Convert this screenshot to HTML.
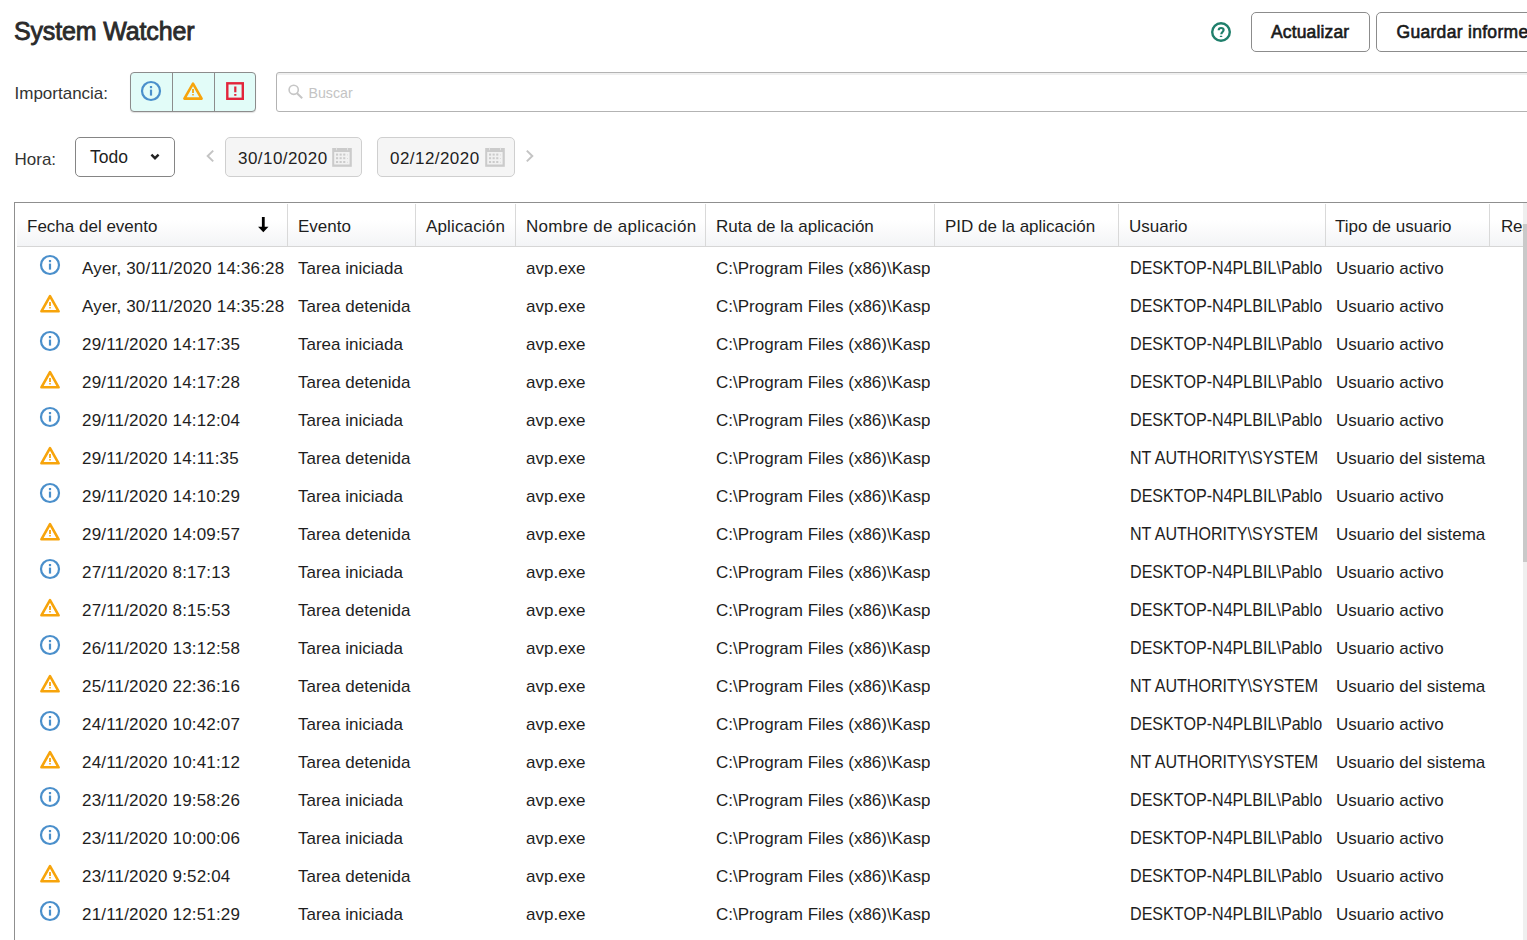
<!DOCTYPE html>
<html><head><meta charset="utf-8"><title>System Watcher</title>
<style>
html,body{margin:0;padding:0;background:#fff;}
body{width:1527px;height:940px;overflow:hidden;position:relative;font-family:"Liberation Sans",sans-serif;color:#1e1e1e;}
.t{position:absolute;font-size:17px;line-height:17px;white-space:nowrap;}
.ic{position:absolute;}
.abs{position:absolute;box-sizing:border-box;}
</style></head><body>

<div class="t" style="left:14px;top:19.34px;font-size:25px;line-height:25px;font-weight:400;-webkit-text-stroke:0.85px #2b2b2b;color:#2b2b2b;letter-spacing:-0.15px">System Watcher</div>
<svg class="ic" style="left:1210px;top:21px" width="22" height="22" viewBox="0 0 22 22"><circle cx="11" cy="11" r="8.8" fill="none" stroke="#1f7f6b" stroke-width="2.4"/><path d="M8.7 9.3 C8.7 7.6 9.9 7 11.1 7 C12.6 7 13.6 7.9 13.6 9.1 C13.6 10.9 11.3 11.2 11.3 13.2" fill="none" stroke="#1f7f6b" stroke-width="2.2"/><rect x="9.8" y="14.8" width="2.5" height="1.2" rx="0.5" fill="#1f7f6b"/></svg>
<div class="abs" style="left:1251px;top:12px;width:119px;height:40px;border:1px solid #8c8c8c;border-radius:5px;background:#fff"></div>
<div class="t" style="left:1271px;top:23.69px;font-size:17.5px;-webkit-text-stroke:0.6px #1a1a1a;letter-spacing:0.15px;color:#1a1a1a">Actualizar</div>
<div class="abs" style="left:1376px;top:12px;width:220px;height:40px;border:1px solid #8c8c8c;border-radius:5px;background:#fff"></div>
<div class="t" style="left:1396.5px;top:23.69px;font-size:17.5px;-webkit-text-stroke:0.6px #1a1a1a;letter-spacing:0.3px;color:#1a1a1a">Guardar informe</div>
<div class="t" style="left:14.5px;top:84.61px;color:#333">Importancia:</div>
<div class="abs" style="left:130px;top:72px;width:126px;height:40px;border:1px solid #8c8c8c;border-radius:4px;background:#e2fcf8;box-shadow:0 1px 1px rgba(0,0,0,0.12)"></div>
<div class="abs" style="left:172px;top:73px;width:1px;height:38px;background:#8c8c8c"></div>
<div class="abs" style="left:214px;top:73px;width:1px;height:38px;background:#8c8c8c"></div>
<svg class="ic" style="left:140px;top:80px" width="22" height="22" viewBox="0 0 22 22"><circle cx="11" cy="11" r="9" fill="none" stroke="#4a8fcb" stroke-width="2.2"/><rect x="9.9" y="6" width="2.2" height="2.2" fill="#4a8fcb"/><rect x="9.9" y="9.6" width="2.2" height="6" fill="#4a8fcb"/></svg>
<svg class="ic" style="left:182px;top:80px" width="22" height="22" viewBox="0 0 22 22"><path d="M11 3.6 L19.6 18.6 L2.4 18.6 Z" fill="none" stroke="#f7a40b" stroke-width="2.6" stroke-linejoin="round"/><rect x="10.1" y="9" width="1.8" height="4" fill="#f7a40b"/><rect x="10.1" y="14.1" width="1.8" height="1.3" fill="#f7a40b"/></svg>
<svg class="ic" style="left:224px;top:80px" width="22" height="22" viewBox="0 0 22 22"><rect x="3.3" y="3.3" width="15.5" height="15.5" fill="none" stroke="#e2253b" stroke-width="2.4"/><rect x="10.2" y="6.5" width="2.2" height="5.8" fill="#e2253b"/><rect x="10.2" y="14" width="2.2" height="1.8" fill="#e2253b"/></svg>
<div class="abs" style="left:276px;top:72px;width:1400px;height:40px;border:1px solid #b3b3b3;border-radius:3px;background:#fff;box-shadow:inset 0 2px 0 #f0f0f0"></div>
<svg class="ic" style="left:285px;top:81px" width="22" height="22" viewBox="0 0 22 22"><circle cx="8.7" cy="8.8" r="4.6" fill="none" stroke="#c6c6c6" stroke-width="1.6"/><path d="M12 12.2 L17.2 17.2" stroke="#c6c6c6" stroke-width="2"/></svg>
<div class="t" style="left:308.5px;top:86.3px;font-size:14.2px;line-height:15px;color:#c4c4c4">Buscar</div>
<div class="t" style="left:14.5px;top:150.61px;color:#333">Hora:</div>
<div class="abs" style="left:75px;top:137px;width:100px;height:40px;border:1px solid #858585;border-radius:5px;background:#fff"></div>
<div class="t" style="left:90px;top:149.11px;font-size:17.5px">Todo</div>
<svg class="ic" style="left:145px;top:146px" width="20" height="20" viewBox="0 0 20 20"><path d="M6.4 8.6 L10 12.2 L13.6 8.6" fill="none" stroke="#222" stroke-width="2.4"/></svg>
<svg class="ic" style="left:200px;top:146px" width="20" height="20" viewBox="0 0 20 20"><path d="M13.2 4.6 L7.7 10 L13.2 15.4" fill="none" stroke="#c4c4c4" stroke-width="2"/></svg>
<svg class="ic" style="left:520px;top:146px" width="20" height="20" viewBox="0 0 20 20"><path d="M6.8 4.6 L12.3 10 L6.8 15.4" fill="none" stroke="#c4c4c4" stroke-width="2"/></svg>
<div class="abs" style="left:225px;top:137px;width:137px;height:40px;border:1px solid #cfcfcf;border-radius:5px;background:#f5f5f5"></div>
<div class="t" style="left:238px;top:150.41px;letter-spacing:0.45px">30/10/2020</div>
<svg class="ic" style="left:332px;top:147px" width="20" height="20" viewBox="0 0 20 20"><rect x="0.2" y="1" width="19.6" height="18.8" fill="#cbcbcb"/><rect x="2.2" y="5" width="15.4" height="12.5" fill="#f1f1f1"/><g fill="#cbcbcb"><rect x="4" y="6.6" width="2.1" height="2"/><rect x="7.6" y="6.6" width="2.1" height="2"/><rect x="11.2" y="6.6" width="2.1" height="2"/><rect x="4" y="10.2" width="2.1" height="2"/><rect x="7.6" y="10.2" width="2.1" height="2"/><rect x="11.2" y="10.2" width="2.1" height="2"/><rect x="4" y="14" width="2.1" height="2"/><rect x="7.6" y="14" width="2.1" height="2"/><rect x="11.2" y="14" width="2.1" height="2"/><rect x="15.2" y="7.4" width="0.6" height="1"/><rect x="15.2" y="11" width="0.6" height="1"/><rect x="15.2" y="14.8" width="0.6" height="1"/></g><rect x="4.2" y="0" width="0.7" height="3.2" fill="#eeeeee"/><rect x="15.2" y="0" width="0.7" height="3.2" fill="#eeeeee"/></svg>
<div class="abs" style="left:377px;top:137px;width:138px;height:40px;border:1px solid #cfcfcf;border-radius:5px;background:#f5f5f5"></div>
<div class="t" style="left:390px;top:150.41px;letter-spacing:0.45px">02/12/2020</div>
<svg class="ic" style="left:485px;top:147px" width="20" height="20" viewBox="0 0 20 20"><rect x="0.2" y="1" width="19.6" height="18.8" fill="#cbcbcb"/><rect x="2.2" y="5" width="15.4" height="12.5" fill="#f1f1f1"/><g fill="#cbcbcb"><rect x="4" y="6.6" width="2.1" height="2"/><rect x="7.6" y="6.6" width="2.1" height="2"/><rect x="11.2" y="6.6" width="2.1" height="2"/><rect x="4" y="10.2" width="2.1" height="2"/><rect x="7.6" y="10.2" width="2.1" height="2"/><rect x="11.2" y="10.2" width="2.1" height="2"/><rect x="4" y="14" width="2.1" height="2"/><rect x="7.6" y="14" width="2.1" height="2"/><rect x="11.2" y="14" width="2.1" height="2"/><rect x="15.2" y="7.4" width="0.6" height="1"/><rect x="15.2" y="11" width="0.6" height="1"/><rect x="15.2" y="14.8" width="0.6" height="1"/></g><rect x="4.2" y="0" width="0.7" height="3.2" fill="#eeeeee"/><rect x="15.2" y="0" width="0.7" height="3.2" fill="#eeeeee"/></svg>
<div class="abs" style="left:14px;top:202px;width:1600px;height:900px;border:1px solid #8f8f8f;background:#fff"></div>
<div class="abs" style="left:17px;top:203px;width:1506px;height:43px;background:linear-gradient(#ffffff 0%,#ffffff 40%,#f3f4f6 100%)"></div>
<div class="abs" style="left:17px;top:246px;width:1506px;height:1px;background:#d6d6d6"></div>
<div class="abs" style="left:287px;top:204px;width:1px;height:42px;background:#d9d9d9"></div>
<div class="abs" style="left:415px;top:204px;width:1px;height:42px;background:#d9d9d9"></div>
<div class="abs" style="left:515px;top:204px;width:1px;height:42px;background:#d9d9d9"></div>
<div class="abs" style="left:705px;top:204px;width:1px;height:42px;background:#d9d9d9"></div>
<div class="abs" style="left:934px;top:204px;width:1px;height:42px;background:#d9d9d9"></div>
<div class="abs" style="left:1118px;top:204px;width:1px;height:42px;background:#d9d9d9"></div>
<div class="abs" style="left:1325px;top:204px;width:1px;height:42px;background:#d9d9d9"></div>
<div class="abs" style="left:1489px;top:204px;width:1px;height:42px;background:#d9d9d9"></div>
<div class="t" style="left:27px;top:217.61px;">Fecha del evento</div>
<svg class="ic" style="left:256px;top:215px" width="14" height="20" viewBox="0 0 14 20"><rect x="5.9" y="2" width="2.8" height="10.5" fill="#000"/><path d="M2.1 11.8 L12.5 11.8 L7.3 17.2 Z" fill="#000"/></svg>
<div class="t" style="left:298px;top:217.61px;">Evento</div>
<div class="t" style="left:426px;top:217.61px;"><span style='letter-spacing:0.15px'>Aplicación</span></div>
<div class="t" style="left:526px;top:217.61px;"><span style='letter-spacing:0.3px'>Nombre de aplicación</span></div>
<div class="t" style="left:716px;top:217.61px;">Ruta de la aplicación</div>
<div class="t" style="left:945px;top:217.61px;">PID de la aplicación</div>
<div class="t" style="left:1129px;top:217.61px;">Usuario</div>
<div class="t" style="left:1335px;top:217.61px;">Tipo de usuario</div>
<div class="t" style="left:1501px;top:217.61px;"><span style='letter-spacing:-0.2px'>Res</span></div>
<svg class="ic" style="left:39px;top:254px" width="22" height="22" viewBox="0 0 22 22"><circle cx="11" cy="11" r="9" fill="none" stroke="#4a8fcb" stroke-width="2.2"/><rect x="9.9" y="6" width="2.2" height="2.2" fill="#4a8fcb"/><rect x="9.9" y="9.6" width="2.2" height="6" fill="#4a8fcb"/></svg>
<div class="t" style="left:82px;top:259.61px;letter-spacing:0.18px">Ayer, 30/11/2020 14:36:28</div>
<div class="t" style="left:298px;top:259.61px;">Tarea iniciada</div>
<div class="t" style="left:526px;top:259.61px;">avp.exe</div>
<div class="t" style="left:716px;top:259.61px;width:214px;overflow:hidden;height:22px;line-height:17px">C:\Program Files (x86)\Kaspersky Lab</div>
<div class="t" style="left:1130px;top:259.61px;transform:scale(0.947,1.08);transform-origin:0 14.4px">DESKTOP-N4PLBIL\Pablo</div>
<div class="t" style="left:1336px;top:259.61px;">Usuario activo</div>
<svg class="ic" style="left:39px;top:293px" width="22" height="22" viewBox="0 0 22 22"><path d="M11 3.2 L19.6 18.3 L2.4 18.3 Z" fill="none" stroke="#f7a40b" stroke-width="2.6" stroke-linejoin="round"/><rect x="10.1" y="9" width="1.8" height="4" fill="#f7a40b"/><rect x="10.1" y="14.1" width="1.8" height="1.3" fill="#f7a40b"/></svg>
<div class="t" style="left:82px;top:297.61px;letter-spacing:0.18px">Ayer, 30/11/2020 14:35:28</div>
<div class="t" style="left:298px;top:297.61px;">Tarea detenida</div>
<div class="t" style="left:526px;top:297.61px;">avp.exe</div>
<div class="t" style="left:716px;top:297.61px;width:214px;overflow:hidden;height:22px;line-height:17px">C:\Program Files (x86)\Kaspersky Lab</div>
<div class="t" style="left:1130px;top:297.61px;transform:scale(0.947,1.08);transform-origin:0 14.4px">DESKTOP-N4PLBIL\Pablo</div>
<div class="t" style="left:1336px;top:297.61px;">Usuario activo</div>
<svg class="ic" style="left:39px;top:330px" width="22" height="22" viewBox="0 0 22 22"><circle cx="11" cy="11" r="9" fill="none" stroke="#4a8fcb" stroke-width="2.2"/><rect x="9.9" y="6" width="2.2" height="2.2" fill="#4a8fcb"/><rect x="9.9" y="9.6" width="2.2" height="6" fill="#4a8fcb"/></svg>
<div class="t" style="left:82px;top:335.61px;letter-spacing:0.18px">29/11/2020 14:17:35</div>
<div class="t" style="left:298px;top:335.61px;">Tarea iniciada</div>
<div class="t" style="left:526px;top:335.61px;">avp.exe</div>
<div class="t" style="left:716px;top:335.61px;width:214px;overflow:hidden;height:22px;line-height:17px">C:\Program Files (x86)\Kaspersky Lab</div>
<div class="t" style="left:1130px;top:335.61px;transform:scale(0.947,1.08);transform-origin:0 14.4px">DESKTOP-N4PLBIL\Pablo</div>
<div class="t" style="left:1336px;top:335.61px;">Usuario activo</div>
<svg class="ic" style="left:39px;top:369px" width="22" height="22" viewBox="0 0 22 22"><path d="M11 3.2 L19.6 18.3 L2.4 18.3 Z" fill="none" stroke="#f7a40b" stroke-width="2.6" stroke-linejoin="round"/><rect x="10.1" y="9" width="1.8" height="4" fill="#f7a40b"/><rect x="10.1" y="14.1" width="1.8" height="1.3" fill="#f7a40b"/></svg>
<div class="t" style="left:82px;top:373.61px;letter-spacing:0.18px">29/11/2020 14:17:28</div>
<div class="t" style="left:298px;top:373.61px;">Tarea detenida</div>
<div class="t" style="left:526px;top:373.61px;">avp.exe</div>
<div class="t" style="left:716px;top:373.61px;width:214px;overflow:hidden;height:22px;line-height:17px">C:\Program Files (x86)\Kaspersky Lab</div>
<div class="t" style="left:1130px;top:373.61px;transform:scale(0.947,1.08);transform-origin:0 14.4px">DESKTOP-N4PLBIL\Pablo</div>
<div class="t" style="left:1336px;top:373.61px;">Usuario activo</div>
<svg class="ic" style="left:39px;top:406px" width="22" height="22" viewBox="0 0 22 22"><circle cx="11" cy="11" r="9" fill="none" stroke="#4a8fcb" stroke-width="2.2"/><rect x="9.9" y="6" width="2.2" height="2.2" fill="#4a8fcb"/><rect x="9.9" y="9.6" width="2.2" height="6" fill="#4a8fcb"/></svg>
<div class="t" style="left:82px;top:411.61px;letter-spacing:0.18px">29/11/2020 14:12:04</div>
<div class="t" style="left:298px;top:411.61px;">Tarea iniciada</div>
<div class="t" style="left:526px;top:411.61px;">avp.exe</div>
<div class="t" style="left:716px;top:411.61px;width:214px;overflow:hidden;height:22px;line-height:17px">C:\Program Files (x86)\Kaspersky Lab</div>
<div class="t" style="left:1130px;top:411.61px;transform:scale(0.947,1.08);transform-origin:0 14.4px">DESKTOP-N4PLBIL\Pablo</div>
<div class="t" style="left:1336px;top:411.61px;">Usuario activo</div>
<svg class="ic" style="left:39px;top:445px" width="22" height="22" viewBox="0 0 22 22"><path d="M11 3.2 L19.6 18.3 L2.4 18.3 Z" fill="none" stroke="#f7a40b" stroke-width="2.6" stroke-linejoin="round"/><rect x="10.1" y="9" width="1.8" height="4" fill="#f7a40b"/><rect x="10.1" y="14.1" width="1.8" height="1.3" fill="#f7a40b"/></svg>
<div class="t" style="left:82px;top:449.61px;letter-spacing:0.18px">29/11/2020 14:11:35</div>
<div class="t" style="left:298px;top:449.61px;">Tarea detenida</div>
<div class="t" style="left:526px;top:449.61px;">avp.exe</div>
<div class="t" style="left:716px;top:449.61px;width:214px;overflow:hidden;height:22px;line-height:17px">C:\Program Files (x86)\Kaspersky Lab</div>
<div class="t" style="left:1130px;top:449.61px;transform:scale(0.945,1.08);transform-origin:0 14.4px">NT AUTHORITY\SYSTEM</div>
<div class="t" style="left:1336px;top:449.61px;">Usuario del sistema</div>
<svg class="ic" style="left:39px;top:482px" width="22" height="22" viewBox="0 0 22 22"><circle cx="11" cy="11" r="9" fill="none" stroke="#4a8fcb" stroke-width="2.2"/><rect x="9.9" y="6" width="2.2" height="2.2" fill="#4a8fcb"/><rect x="9.9" y="9.6" width="2.2" height="6" fill="#4a8fcb"/></svg>
<div class="t" style="left:82px;top:487.61px;letter-spacing:0.18px">29/11/2020 14:10:29</div>
<div class="t" style="left:298px;top:487.61px;">Tarea iniciada</div>
<div class="t" style="left:526px;top:487.61px;">avp.exe</div>
<div class="t" style="left:716px;top:487.61px;width:214px;overflow:hidden;height:22px;line-height:17px">C:\Program Files (x86)\Kaspersky Lab</div>
<div class="t" style="left:1130px;top:487.61px;transform:scale(0.947,1.08);transform-origin:0 14.4px">DESKTOP-N4PLBIL\Pablo</div>
<div class="t" style="left:1336px;top:487.61px;">Usuario activo</div>
<svg class="ic" style="left:39px;top:521px" width="22" height="22" viewBox="0 0 22 22"><path d="M11 3.2 L19.6 18.3 L2.4 18.3 Z" fill="none" stroke="#f7a40b" stroke-width="2.6" stroke-linejoin="round"/><rect x="10.1" y="9" width="1.8" height="4" fill="#f7a40b"/><rect x="10.1" y="14.1" width="1.8" height="1.3" fill="#f7a40b"/></svg>
<div class="t" style="left:82px;top:525.61px;letter-spacing:0.18px">29/11/2020 14:09:57</div>
<div class="t" style="left:298px;top:525.61px;">Tarea detenida</div>
<div class="t" style="left:526px;top:525.61px;">avp.exe</div>
<div class="t" style="left:716px;top:525.61px;width:214px;overflow:hidden;height:22px;line-height:17px">C:\Program Files (x86)\Kaspersky Lab</div>
<div class="t" style="left:1130px;top:525.61px;transform:scale(0.945,1.08);transform-origin:0 14.4px">NT AUTHORITY\SYSTEM</div>
<div class="t" style="left:1336px;top:525.61px;">Usuario del sistema</div>
<svg class="ic" style="left:39px;top:558px" width="22" height="22" viewBox="0 0 22 22"><circle cx="11" cy="11" r="9" fill="none" stroke="#4a8fcb" stroke-width="2.2"/><rect x="9.9" y="6" width="2.2" height="2.2" fill="#4a8fcb"/><rect x="9.9" y="9.6" width="2.2" height="6" fill="#4a8fcb"/></svg>
<div class="t" style="left:82px;top:563.61px;letter-spacing:0.18px">27/11/2020 8:17:13</div>
<div class="t" style="left:298px;top:563.61px;">Tarea iniciada</div>
<div class="t" style="left:526px;top:563.61px;">avp.exe</div>
<div class="t" style="left:716px;top:563.61px;width:214px;overflow:hidden;height:22px;line-height:17px">C:\Program Files (x86)\Kaspersky Lab</div>
<div class="t" style="left:1130px;top:563.61px;transform:scale(0.947,1.08);transform-origin:0 14.4px">DESKTOP-N4PLBIL\Pablo</div>
<div class="t" style="left:1336px;top:563.61px;">Usuario activo</div>
<svg class="ic" style="left:39px;top:597px" width="22" height="22" viewBox="0 0 22 22"><path d="M11 3.2 L19.6 18.3 L2.4 18.3 Z" fill="none" stroke="#f7a40b" stroke-width="2.6" stroke-linejoin="round"/><rect x="10.1" y="9" width="1.8" height="4" fill="#f7a40b"/><rect x="10.1" y="14.1" width="1.8" height="1.3" fill="#f7a40b"/></svg>
<div class="t" style="left:82px;top:601.61px;letter-spacing:0.18px">27/11/2020 8:15:53</div>
<div class="t" style="left:298px;top:601.61px;">Tarea detenida</div>
<div class="t" style="left:526px;top:601.61px;">avp.exe</div>
<div class="t" style="left:716px;top:601.61px;width:214px;overflow:hidden;height:22px;line-height:17px">C:\Program Files (x86)\Kaspersky Lab</div>
<div class="t" style="left:1130px;top:601.61px;transform:scale(0.947,1.08);transform-origin:0 14.4px">DESKTOP-N4PLBIL\Pablo</div>
<div class="t" style="left:1336px;top:601.61px;">Usuario activo</div>
<svg class="ic" style="left:39px;top:634px" width="22" height="22" viewBox="0 0 22 22"><circle cx="11" cy="11" r="9" fill="none" stroke="#4a8fcb" stroke-width="2.2"/><rect x="9.9" y="6" width="2.2" height="2.2" fill="#4a8fcb"/><rect x="9.9" y="9.6" width="2.2" height="6" fill="#4a8fcb"/></svg>
<div class="t" style="left:82px;top:639.61px;letter-spacing:0.18px">26/11/2020 13:12:58</div>
<div class="t" style="left:298px;top:639.61px;">Tarea iniciada</div>
<div class="t" style="left:526px;top:639.61px;">avp.exe</div>
<div class="t" style="left:716px;top:639.61px;width:214px;overflow:hidden;height:22px;line-height:17px">C:\Program Files (x86)\Kaspersky Lab</div>
<div class="t" style="left:1130px;top:639.61px;transform:scale(0.947,1.08);transform-origin:0 14.4px">DESKTOP-N4PLBIL\Pablo</div>
<div class="t" style="left:1336px;top:639.61px;">Usuario activo</div>
<svg class="ic" style="left:39px;top:673px" width="22" height="22" viewBox="0 0 22 22"><path d="M11 3.2 L19.6 18.3 L2.4 18.3 Z" fill="none" stroke="#f7a40b" stroke-width="2.6" stroke-linejoin="round"/><rect x="10.1" y="9" width="1.8" height="4" fill="#f7a40b"/><rect x="10.1" y="14.1" width="1.8" height="1.3" fill="#f7a40b"/></svg>
<div class="t" style="left:82px;top:677.61px;letter-spacing:0.18px">25/11/2020 22:36:16</div>
<div class="t" style="left:298px;top:677.61px;">Tarea detenida</div>
<div class="t" style="left:526px;top:677.61px;">avp.exe</div>
<div class="t" style="left:716px;top:677.61px;width:214px;overflow:hidden;height:22px;line-height:17px">C:\Program Files (x86)\Kaspersky Lab</div>
<div class="t" style="left:1130px;top:677.61px;transform:scale(0.945,1.08);transform-origin:0 14.4px">NT AUTHORITY\SYSTEM</div>
<div class="t" style="left:1336px;top:677.61px;">Usuario del sistema</div>
<svg class="ic" style="left:39px;top:710px" width="22" height="22" viewBox="0 0 22 22"><circle cx="11" cy="11" r="9" fill="none" stroke="#4a8fcb" stroke-width="2.2"/><rect x="9.9" y="6" width="2.2" height="2.2" fill="#4a8fcb"/><rect x="9.9" y="9.6" width="2.2" height="6" fill="#4a8fcb"/></svg>
<div class="t" style="left:82px;top:715.61px;letter-spacing:0.18px">24/11/2020 10:42:07</div>
<div class="t" style="left:298px;top:715.61px;">Tarea iniciada</div>
<div class="t" style="left:526px;top:715.61px;">avp.exe</div>
<div class="t" style="left:716px;top:715.61px;width:214px;overflow:hidden;height:22px;line-height:17px">C:\Program Files (x86)\Kaspersky Lab</div>
<div class="t" style="left:1130px;top:715.61px;transform:scale(0.947,1.08);transform-origin:0 14.4px">DESKTOP-N4PLBIL\Pablo</div>
<div class="t" style="left:1336px;top:715.61px;">Usuario activo</div>
<svg class="ic" style="left:39px;top:749px" width="22" height="22" viewBox="0 0 22 22"><path d="M11 3.2 L19.6 18.3 L2.4 18.3 Z" fill="none" stroke="#f7a40b" stroke-width="2.6" stroke-linejoin="round"/><rect x="10.1" y="9" width="1.8" height="4" fill="#f7a40b"/><rect x="10.1" y="14.1" width="1.8" height="1.3" fill="#f7a40b"/></svg>
<div class="t" style="left:82px;top:753.61px;letter-spacing:0.18px">24/11/2020 10:41:12</div>
<div class="t" style="left:298px;top:753.61px;">Tarea detenida</div>
<div class="t" style="left:526px;top:753.61px;">avp.exe</div>
<div class="t" style="left:716px;top:753.61px;width:214px;overflow:hidden;height:22px;line-height:17px">C:\Program Files (x86)\Kaspersky Lab</div>
<div class="t" style="left:1130px;top:753.61px;transform:scale(0.945,1.08);transform-origin:0 14.4px">NT AUTHORITY\SYSTEM</div>
<div class="t" style="left:1336px;top:753.61px;">Usuario del sistema</div>
<svg class="ic" style="left:39px;top:786px" width="22" height="22" viewBox="0 0 22 22"><circle cx="11" cy="11" r="9" fill="none" stroke="#4a8fcb" stroke-width="2.2"/><rect x="9.9" y="6" width="2.2" height="2.2" fill="#4a8fcb"/><rect x="9.9" y="9.6" width="2.2" height="6" fill="#4a8fcb"/></svg>
<div class="t" style="left:82px;top:791.61px;letter-spacing:0.18px">23/11/2020 19:58:26</div>
<div class="t" style="left:298px;top:791.61px;">Tarea iniciada</div>
<div class="t" style="left:526px;top:791.61px;">avp.exe</div>
<div class="t" style="left:716px;top:791.61px;width:214px;overflow:hidden;height:22px;line-height:17px">C:\Program Files (x86)\Kaspersky Lab</div>
<div class="t" style="left:1130px;top:791.61px;transform:scale(0.947,1.08);transform-origin:0 14.4px">DESKTOP-N4PLBIL\Pablo</div>
<div class="t" style="left:1336px;top:791.61px;">Usuario activo</div>
<svg class="ic" style="left:39px;top:824px" width="22" height="22" viewBox="0 0 22 22"><circle cx="11" cy="11" r="9" fill="none" stroke="#4a8fcb" stroke-width="2.2"/><rect x="9.9" y="6" width="2.2" height="2.2" fill="#4a8fcb"/><rect x="9.9" y="9.6" width="2.2" height="6" fill="#4a8fcb"/></svg>
<div class="t" style="left:82px;top:829.61px;letter-spacing:0.18px">23/11/2020 10:00:06</div>
<div class="t" style="left:298px;top:829.61px;">Tarea iniciada</div>
<div class="t" style="left:526px;top:829.61px;">avp.exe</div>
<div class="t" style="left:716px;top:829.61px;width:214px;overflow:hidden;height:22px;line-height:17px">C:\Program Files (x86)\Kaspersky Lab</div>
<div class="t" style="left:1130px;top:829.61px;transform:scale(0.947,1.08);transform-origin:0 14.4px">DESKTOP-N4PLBIL\Pablo</div>
<div class="t" style="left:1336px;top:829.61px;">Usuario activo</div>
<svg class="ic" style="left:39px;top:863px" width="22" height="22" viewBox="0 0 22 22"><path d="M11 3.2 L19.6 18.3 L2.4 18.3 Z" fill="none" stroke="#f7a40b" stroke-width="2.6" stroke-linejoin="round"/><rect x="10.1" y="9" width="1.8" height="4" fill="#f7a40b"/><rect x="10.1" y="14.1" width="1.8" height="1.3" fill="#f7a40b"/></svg>
<div class="t" style="left:82px;top:867.61px;letter-spacing:0.18px">23/11/2020 9:52:04</div>
<div class="t" style="left:298px;top:867.61px;">Tarea detenida</div>
<div class="t" style="left:526px;top:867.61px;">avp.exe</div>
<div class="t" style="left:716px;top:867.61px;width:214px;overflow:hidden;height:22px;line-height:17px">C:\Program Files (x86)\Kaspersky Lab</div>
<div class="t" style="left:1130px;top:867.61px;transform:scale(0.947,1.08);transform-origin:0 14.4px">DESKTOP-N4PLBIL\Pablo</div>
<div class="t" style="left:1336px;top:867.61px;">Usuario activo</div>
<svg class="ic" style="left:39px;top:900px" width="22" height="22" viewBox="0 0 22 22"><circle cx="11" cy="11" r="9" fill="none" stroke="#4a8fcb" stroke-width="2.2"/><rect x="9.9" y="6" width="2.2" height="2.2" fill="#4a8fcb"/><rect x="9.9" y="9.6" width="2.2" height="6" fill="#4a8fcb"/></svg>
<div class="t" style="left:82px;top:905.61px;letter-spacing:0.18px">21/11/2020 12:51:29</div>
<div class="t" style="left:298px;top:905.61px;">Tarea iniciada</div>
<div class="t" style="left:526px;top:905.61px;">avp.exe</div>
<div class="t" style="left:716px;top:905.61px;width:214px;overflow:hidden;height:22px;line-height:17px">C:\Program Files (x86)\Kaspersky Lab</div>
<div class="t" style="left:1130px;top:905.61px;transform:scale(0.947,1.08);transform-origin:0 14.4px">DESKTOP-N4PLBIL\Pablo</div>
<div class="t" style="left:1336px;top:905.61px;">Usuario activo</div>
<div class="abs" style="left:1523px;top:203px;width:4px;height:737px;background:#efefef"></div>
<div class="abs" style="left:1523px;top:224px;width:4px;height:338px;background:#c9c9c9"></div>
</body></html>
